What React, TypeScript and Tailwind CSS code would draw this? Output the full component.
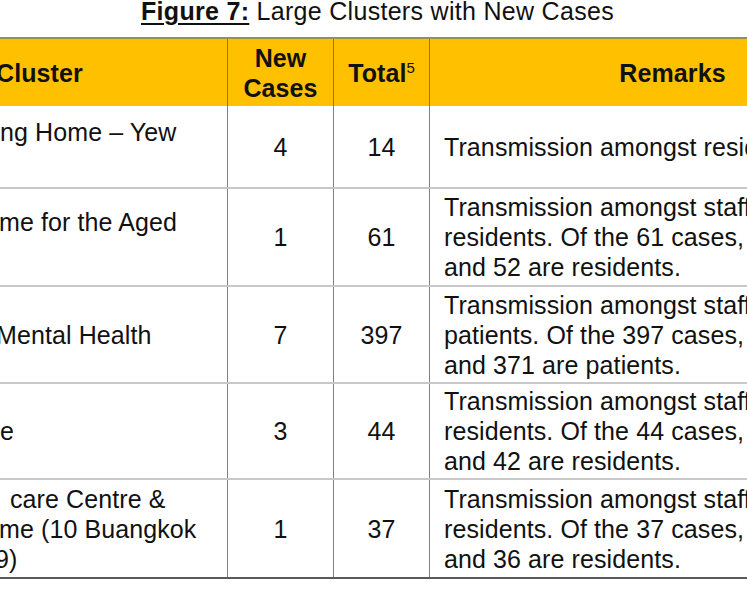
const rows = [
  {
    cluster: [
      { text: "ng Home – Yew", indent: "ml-0" },
      { text: "\u00a0", indent: "ml-0" },
    ],
    newCases: "4",
    total: "14",
    remarks: ["Transmission amongst residents."],
    height: "h-[83px]",
  },
  {
    cluster: [
      { text: "me for the Aged", indent: "ml-[-1px]" },
      { text: "\u00a0", indent: "ml-0" },
    ],
    newCases: "1",
    total: "61",
    remarks: [
      "Transmission amongst staff and",
      "residents. Of the 61 cases, 9 are staff",
      "and 52 are residents.",
    ],
    height: "h-[98px]",
  },
  {
    cluster: [{ text: "Mental Health", indent: "ml-[-4px]" }],
    newCases: "7",
    total: "397",
    remarks: [
      "Transmission amongst staff and",
      "patients. Of the 397 cases, 26 are staff",
      "and 371 are patients.",
    ],
    height: "h-[97px]",
  },
  {
    cluster: [{ text: "e", indent: "ml-0" }],
    newCases: "3",
    total: "44",
    remarks: [
      "Transmission amongst staff and",
      "residents. Of the 44 cases, 2 are staff",
      "and 42 are residents.",
    ],
    height: "h-[96px]",
  },
  {
    cluster: [
      { text: "care Centre &", indent: "ml-[10px]" },
      { text: "me (10 Buangkok", indent: "ml-[-1px]" },
      { text: "9)", indent: "ml-[-5px]" },
    ],
    newCases: "1",
    total: "37",
    remarks: [
      "Transmission amongst staff and",
      "residents. Of the 37 cases, 1 is staff",
      "and 36 are residents.",
    ],
    height: "h-[97px]",
  },
];

export default function App() {
  return (
    <div className="w-[747px] h-[598px] overflow-hidden bg-white text-[#111] font-['Liberation_Sans',Arial,sans-serif]">
      <div className="h-[37px] pl-2 text-center text-[25px] leading-[28px] tracking-[0.3px] whitespace-nowrap">
        <span className="relative top-[-3px] font-bold underline decoration-2 underline-offset-[3px]">Figure 7:</span>
        <span className="relative top-[-3px]"> Large Clusters with New Cases</span>
      </div>

      <div className="w-[915px] border-t-2 border-b-2 border-t-[#a08c50] border-b-[#5a5a5a] text-[25px] leading-[30px] tracking-[0.1px]">
        <div className="grid grid-cols-[227px_106px_96px_486px] h-[67px] bg-[#ffc000] font-bold">
          <div className="flex items-center overflow-hidden whitespace-nowrap">
            <span className="ml-[-4px]">Cluster</span>
          </div>
          <div className="flex flex-col items-center justify-center border-l border-[#7a7a5a]">
            <span>New</span>
            <span>Cases</span>
          </div>
          <div className="flex items-center justify-center border-l border-[#7a7a5a]">
            <span>
              Total<sup className="top-[-9px] text-[15px] font-normal tracking-normal">5</sup>
            </span>
          </div>
          <div className="flex items-center justify-center border-l border-[#7a7a5a]">
            <span>Remarks</span>
          </div>
        </div>

        {rows.map((row, i) => (
          <div
            key={i}
            className={`grid grid-cols-[227px_106px_96px_486px] ${row.height} ${
              i < rows.length - 1 ? "border-b-2 border-[#c8c8c8]" : ""
            }`}
          >
            <div className="flex flex-col justify-center overflow-hidden whitespace-nowrap">
              {row.cluster.map((line, j) => (
                <span key={j} className={line.indent}>
                  {line.text}
                </span>
              ))}
            </div>
            <div className="flex items-center justify-center border-l border-[#808080]">
              {row.newCases}
            </div>
            <div className="flex items-center justify-center border-l border-[#808080]">
              {row.total}
            </div>
            <div className="flex flex-col justify-center pl-[14px] border-l border-[#808080] whitespace-nowrap">
              {row.remarks.map((line, j) => (
                <span key={j}>{line}</span>
              ))}
            </div>
          </div>
        ))}
      </div>
    </div>
  );
}
